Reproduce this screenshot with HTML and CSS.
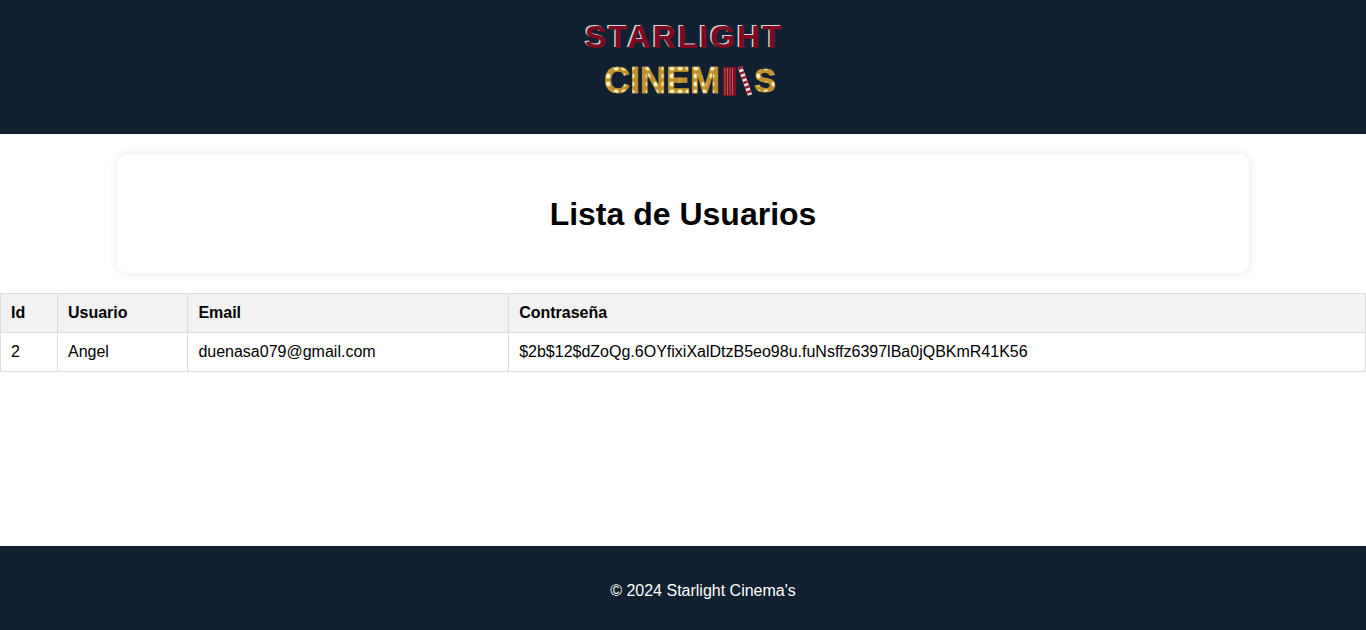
FILE: index.html
```html
<!DOCTYPE html>
<html lang="es">
<head>
<meta charset="utf-8">
<title>Lista de Usuarios</title>
<link rel="stylesheet" href="styles.css">
</head>
<body>
<header class="site-header">
  <div class="logo">
    <div class="logo-top">STARLIGHT</div>
    <div class="logo-bottom">
      <span class="logo-cinema">CINEM</span>
      <svg class="logo-reel" width="34" height="30" viewBox="0 0 34 30" aria-hidden="true">
        <rect x="1" y="1" width="13" height="29" fill="#7d0f1f"/>
        <path d="M3 2v27M5.500 2v27M8 2v27M10.500 2v27" stroke="#c96a70" stroke-width="0.8"/>
        <path d="M18 1l10 28" stroke="#f3e6dc" stroke-width="4.500"/>
        <path d="M18 1l10 28" stroke="#a3182a" stroke-width="4.500" stroke-dasharray="2.500 2.500"/>
      </svg>
      <span class="logo-cinema logo-last">S</span>
    </div>
  </div>
</header>
<main class="content">
  <section class="card">
    <h1 class="title">Lista de Usuarios</h1>
  </section>
  <table class="users">
    <thead>
      <tr><th>Id</th><th>Usuario</th><th>Email</th><th>Contraseña</th></tr>
    </thead>
    <tbody>
      <tr><td>2</td><td>Angel</td><td>duenasa079@gmail.com</td><td>$2b$12$dZoQg.6OYfixiXalDtzB5eo98u.fuNsffz6397lBa0jQBKmR41K56</td></tr>
    </tbody>
  </table>
</main>
<footer class="site-footer">© 2024 Starlight Cinema's</footer>
</body>
</html>
```
FILE: styles.css
```css
html, body {
  margin: 0;
  height: 100%;
}
body {
  display: flex;
  flex-direction: column;
  height: 100vh;
  font-family: "Liberation Sans", Arial, sans-serif;
  font-size: 16px;
  color: #000;
  background: #fff;
}
.site-header {
  height: 134px;
  flex: none;
  background: #112131;
  display: flex;
  justify-content: center;
}
.logo {
  width: 198px;
  padding-top: 19px;
  display: flex;
  flex-direction: column;
}
.logo-top {
  font-size: 32px;
  line-height: 37px;
  font-weight: 700;
  letter-spacing: 2px;
  white-space: nowrap;
  color: #7d0a20;
  text-shadow: -1.500px -1.500px 0 #dcd6da;
  padding-left: 1px;
}
.logo-bottom {
  margin-top: 8px;
  padding-left: 20px;
  display: flex;
  align-items: center;
  height: 34px;
}
.logo-cinema {
  font-size: 36px;
  line-height: 34px;
  font-weight: 700;
  color: transparent;
  -webkit-text-stroke: 0.600px #c2922c;
  background-color: #c2922c;
  background-image: radial-gradient(circle, #fff4c4 0 2px, transparent 3px);
  background-size: 8px 8px;
  -webkit-background-clip: text;
  background-clip: text;
}
.logo-last {
  font-size: 33px;
  margin-left: -2px;
}
.logo-reel {
  flex: none;
  align-self: flex-start;
  margin: 2px 0 0 2px;
}
.content {
  flex: 1;
}
.card {
  width: 82.900%;
  box-sizing: border-box;
  margin: 20px auto;
  padding: 20px;
  background: #fff;
  border-radius: 10px;
  box-shadow: 0 0 10px rgba(0, 0, 0, 0.1);
  text-align: center;
}
.title {
  font-size: 32px;
  line-height: 36px;
  margin: 22px 0 21px;
}
.users {
  width: 100%;
  border-collapse: collapse;
}
.users th,
.users td {
  border: 1px solid #ddd;
  padding: 10px;
  text-align: left;
}
.users th {
  background: #f2f2f2;
}
.site-footer {
  flex: none;
  height: 84px;
  background: #112131;
  color: #fff;
  display: flex;
  align-items: center;
  justify-content: center;
  padding: 6px 0 0 40px;
  box-sizing: border-box;
}
```
